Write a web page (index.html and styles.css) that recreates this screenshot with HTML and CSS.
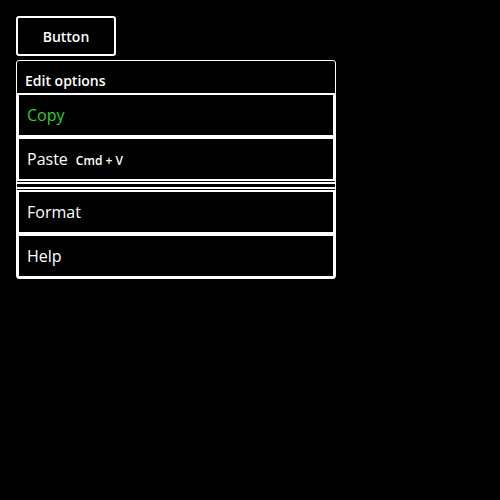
FILE: index.html
```html
<!DOCTYPE html>
<html>
<head>
<meta charset="utf-8">
<link rel="stylesheet" href="styles.css">
</head>
<body>
<div class="page">
  <button class="trigger">Button</button>
  <div class="menu">
    <div class="menu-label">Edit options</div>
    <div class="menu-item active">Copy</div>
    <div class="menu-item">Paste<span class="shortcut">Cmd + V</span></div>
    <div class="separator"></div>
    <div class="menu-item">Format</div>
    <div class="menu-item">Help</div>
  </div>
</div>
</body>
</html>
```
FILE: styles.css
```css
html, body {
  margin: 0;
  background: #000;
  color: #fff;
  font-family: "Open Sans", "Noto Sans", sans-serif;
}
.page {
  padding: 16px;
  display: flex;
  flex-direction: column;
  align-items: flex-start;
  gap: 4px;
}
.trigger {
  width: 100px;
  height: 40px;
  background: #000;
  color: #fff;
  border: 2px solid #fff;
  border-radius: 3px;
  font-family: inherit;
  font-size: 14px;
  font-weight: 600;
  padding: 0;
}
.menu {
  width: 320px;
  box-sizing: border-box;
  border: 1px solid #fff;
  border-radius: 3px;
  display: flex;
  flex-direction: column;
}
.menu-label {
  height: 32px;
  padding: 12px 8px 0;
  box-sizing: border-box;
  font-size: 14px;
  font-weight: 600;
  line-height: 16px;
}
.menu-item {
  height: 44px;
  box-sizing: border-box;
  border: 2px solid #fff;
  padding: 0 8px;
  display: flex;
  align-items: center;
  font-size: 16px;
}
.menu-item.active {
  color: #2ed12e;
}
.shortcut {
  font-size: 12px;
  font-weight: 600;
  margin-left: 8px;
  margin-top: 2px;
}
.separator {
  margin: 1px 0;
  height: 3px;
  border-top: 2px solid #fff;
  border-bottom: 2px solid #fff;
}
```
